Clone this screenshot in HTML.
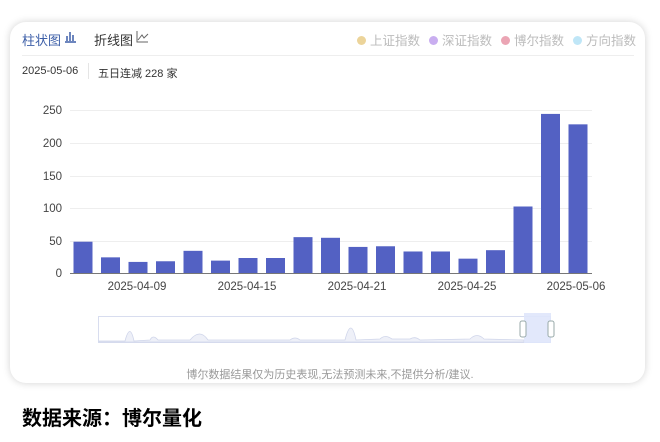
<!DOCTYPE html><html><head><meta charset="utf-8"><style>
body{margin:0;width:660px;height:442px;background:#fff;font-family:"Liberation Sans","Noto Sans CJK SC",sans-serif;position:relative;overflow:hidden}
.card{position:absolute;left:10px;top:22px;width:635px;height:361px;border-radius:16px;background:#fff;box-shadow:0 0 8px rgba(0,0,0,.18)}
.t{position:absolute;white-space:nowrap}
.lg span.d{display:inline-block;width:9px;height:9px;border-radius:50%;margin-right:4px;vertical-align:-0px}
.lg span.i{margin-left:9px}
</style></head><body>
<div class="card"></div>
<div class="t" style="left:22px;top:30px;font-size:13px;color:#3d5fa8">柱状图</div>
<svg class="t" style="left:64px;top:30px" width="13" height="13"><path d="M1 12H12M3 11V6M6 11V2M9 11V5" stroke="#3d5fa8" stroke-width="1.5" fill="none"/></svg>
<div class="t" style="left:94px;top:30px;font-size:13px;color:#333">折线图</div>
<svg class="t" style="left:136px;top:30px" width="13" height="13"><path d="M1 1V12H12M2 10L6 5L8 8L12 4" stroke="#666" stroke-width="1" fill="none"/></svg>
<div class="t lg" style="right:24px;top:30px;font-size:12.5px;color:#bbb">
<span class="i"><span class="d" style="background:#ecd49a"></span>上证指数</span><span class="i"><span class="d" style="background:#c9aef0"></span>深证指数</span><span class="i"><span class="d" style="background:#eba5b4"></span>博尔指数</span><span class="i"><span class="d" style="background:#bfe6f7"></span>方向指数</span></div>
<div style="position:absolute;left:22px;top:55px;width:612px;height:1px;background:#eee"></div>
<div class="t" style="left:22px;top:65px;font-size:11px;color:#333">2025-05-06</div>
<div style="position:absolute;left:88px;top:63px;width:1px;height:16px;background:#e5e5e5"></div>
<div class="t" style="left:98px;top:65px;font-size:11px;color:#333">五日连减 228 家</div>
<svg class="t" style="left:0;top:0" width="660" height="442">
<g stroke="#eee" stroke-width="1"><line x1="70" x2="592" y1="110.5" y2="110.5"/><line x1="70" x2="592" y1="143.5" y2="143.5"/><line x1="70" x2="592" y1="176.5" y2="176.5"/><line x1="70" x2="592" y1="208.5" y2="208.5"/><line x1="70" x2="592" y1="241.5" y2="241.5"/></g>
<line x1="70" x2="592" y1="273.5" y2="273.5" stroke="#777"/>
<g font-size="11.5" fill="#444" text-anchor="end" font-family="Liberation Sans"><text x="62" y="114">250</text><text x="62" y="147">200</text><text x="62" y="180">150</text><text x="62" y="212">100</text><text x="62" y="245">50</text><text x="62" y="277">0</text></g>
<g fill="#5361c3" id="b"></g>
<g font-size="11.5" fill="#444" text-anchor="middle" font-family="Liberation Sans"><text x="137" y="290">2025-04-09</text><text x="247" y="290">2025-04-15</text><text x="357" y="290">2025-04-21</text><text x="467" y="290">2025-04-25</text><text x="576" y="290">2025-05-06</text></g>
<rect x="98.5" y="316.5" width="452" height="26" fill="#fff" stroke="#d8ddef"/>
<path d="M99 341 L125 341 Q130 322 134 341 L150 340 Q153 334 158 340 L190 340 Q200 328 208 340 L290 340 Q295 336 300 340 L345 340 Q351 316 356 340 L380 339 Q385 334 392 339 L410 339 Q415 336 420 340 L470 339 Q477 332 484 339 L524 340 L524 342 L99 342Z" fill="#eef0f8" stroke="#cfd5ea" stroke-width="0.8"/>
<rect x="524" y="313" width="27" height="30" fill="#dfe6fb" opacity="0.9"/>
<rect x="520" y="321" width="6" height="16" rx="2" fill="#fff" stroke="#9aa"/>
<rect x="548" y="321" width="6" height="16" rx="2" fill="#fff" stroke="#9aa"/>
</svg>
<div class="t" style="left:0;width:660px;text-align:center;top:366px;font-size:11px;color:#999">博尔数据结果仅为历史表现,无法预测未来,不提供分析/建议.</div>
<div class="t" style="left:22px;top:402px;font-size:20px;font-weight:bold;color:#000">数据来源：博尔量化</div>
<script>
var v=[48,24,17,18,34,19,23,23,55,54,40,41,33,33,22,35,102,244,228],g=document.getElementById('b'),s='';
v.forEach(function(x,i){var c=83+i*27.5,h=x*0.652;s+='<rect x="'+(c-9.5)+'" y="'+(273-h)+'" width="19" height="'+h+'"/>';});
g.innerHTML=s;
</script>
</body></html>
